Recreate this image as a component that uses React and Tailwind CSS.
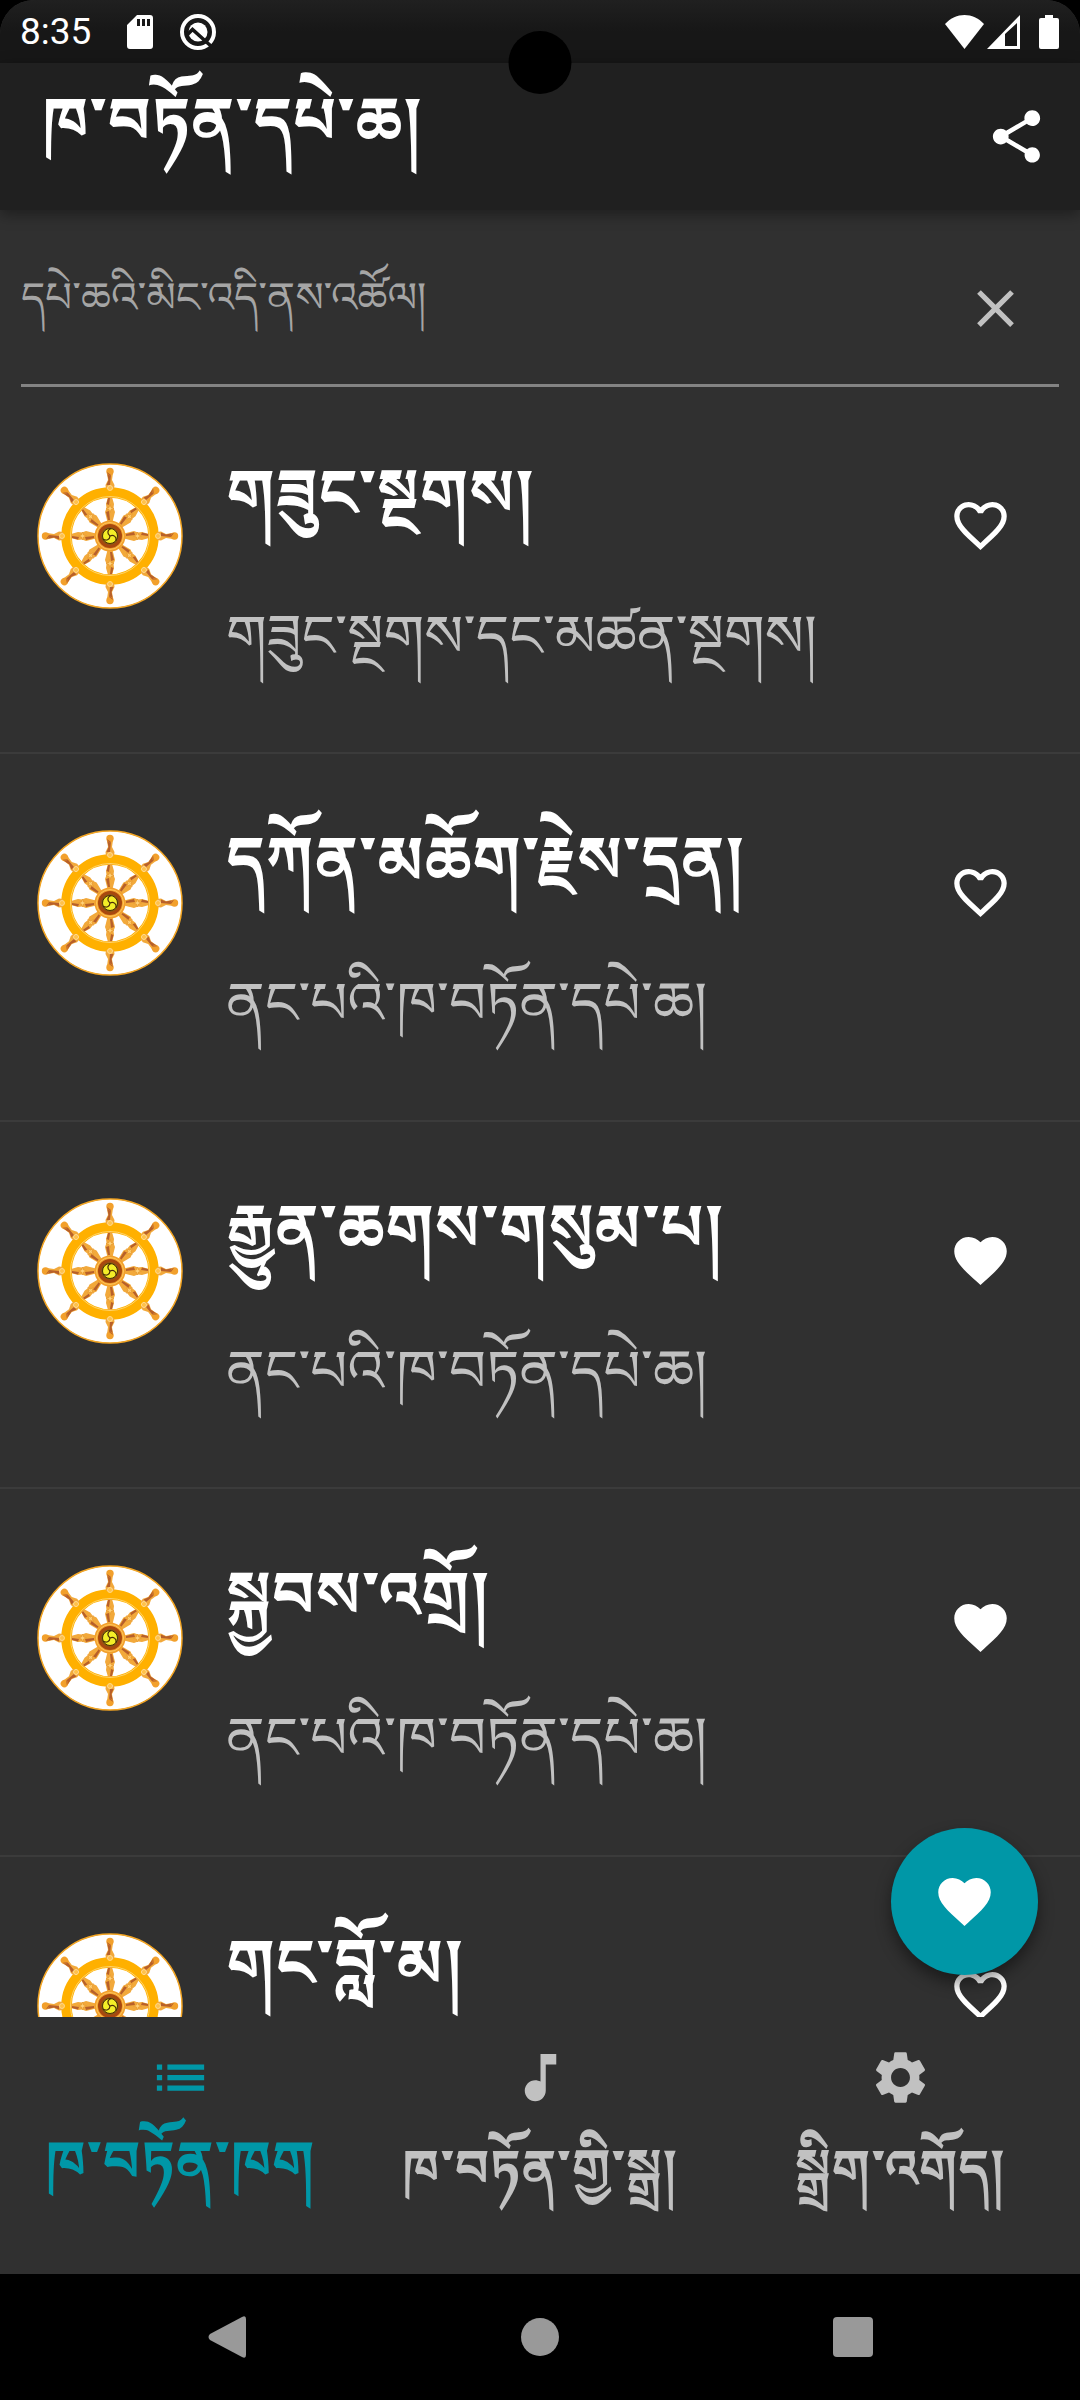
import { useState } from 'react';
import { MdShare, MdClose, MdFavorite, MdFavoriteBorder, MdList, MdMusicNote, MdSettings } from 'react-icons/md';

const BOOKS = [
  { id: 1, title: 'གཟུང་སྔགས།', category: 'གཟུང་སྔགས་དང་མཚན་སྔགས།', liked: false },
  { id: 2, title: 'དཀོན་མཆོག་རྗེས་དྲན།', category: 'ནང་པའི་ཁ་བཏོན་དཔེ་ཆ།', liked: false },
  { id: 3, title: 'རྒྱུན་ཆགས་གསུམ་པ།', category: 'ནང་པའི་ཁ་བཏོན་དཔེ་ཆ།', liked: true },
  { id: 4, title: 'སྐྱབས་འགྲོ།', category: 'ནང་པའི་ཁ་བཏོན་དཔེ་ཆ།', liked: true },
  { id: 5, title: 'གང་བློ་མ།', liked: false },
];

const SPOKES = [0, 45, 90, 135, 180, 225, 270, 315];

function DharmaWheel() {
  return (
    <svg viewBox="0 0 146 146" className="w-[146px] h-[146px] shrink-0" aria-hidden="true">
      <circle cx="73" cy="73" r="72" fill="#fff" stroke="#f5a623" strokeWidth="1.5" />
      <circle cx="73" cy="73" r="43.5" fill="none" stroke="#ffb000" strokeWidth="10.5" />
      <circle cx="73" cy="73" r="39.5" fill="none" stroke="#ffd56b" strokeWidth="1" />
      {SPOKES.map(a => (
        <g key={a} transform={`rotate(${a} 73 73)`}>
          <path d="M70.5 59 L68 49 L69.5 45 L69 41 L71 34 L75 34 L77 41 L76.5 45 L78 49 L75.5 59 Z" fill="#f2a93b" />
          <path d="M71 57 L69 49 L72 48 L73 57 Z M69.5 41 L71 35 L73 35 L72 42 Z" fill="#b8602a" />
          <path d="M69 26 L68.5 22 L71 17 L70 10 L76 10 L75 17 L77.5 22 L77 26 Z" fill="#f2a93b" />
          <path d="M69.5 22 L71.5 17 L70 10 L74 12 L73 22 Z" fill="#b8602a" />
          <circle cx="73" cy="8.5" r="3.7" fill="#f2a02c" />
          <path d="M70 9 A3.5 3.5 0 0 0 74 12 Z" fill="#b8602a" />
          <path d="M73 41.5 L74 44.5 L77 45.5 L74 46.5 L73 49.5 L72 46.5 L69 45.5 L72 44.5 Z" fill="#ffd27a" stroke="#e08a1e" strokeWidth="0.5" />
          <circle cx="73" cy="25" r="2.5" fill="#ffc14a" stroke="#ffe0a0" strokeWidth="0.8" />
        </g>
      ))}
      <circle cx="73" cy="73" r="15.5" fill="#f2a02c" />
      <circle cx="73" cy="73" r="13.5" fill="none" stroke="#ffc65c" strokeWidth="1" />
      <circle cx="73" cy="73" r="12" fill="#a8480f" />
      <circle cx="73" cy="73" r="9" fill="#8a5a14" />
      <circle cx="73" cy="73" r="7.5" fill="#f3ee28" stroke="#4a2c08" strokeWidth="1" />
      {[0, 120, 240].map(a => (
        <path key={a} transform={`rotate(${a} 73 73)`} d="M73 73 C70 71 70 67 74 65.5" fill="none" stroke="#4a2c08" strokeWidth="1.2" />
      ))}
    </svg>
  );
}

function StatusBar() {
  return (
    <div className="h-[63px] shrink-0 bg-linear-to-b from-[#202020] to-[#171717] to-50% flex items-center justify-between pl-[20px] pr-[21px]">
      <div className="flex items-center">
        <span className="text-[37px] leading-[63px]">8:35</span>
        <svg viewBox="0 0 26 34" className="w-[26px] h-[34px] ml-[36px]" fill="#fff" aria-hidden="true">
          <path fillRule="evenodd" d="M10 0H23a3 3 0 0 1 3 3V31a3 3 0 0 1-3 3H3a3 3 0 0 1-3-3V10ZM10 4v7h3V4ZM15 4v7h3V4ZM20 4v7h3V4Z" />
        </svg>
        <svg viewBox="0 0 36 36" className="w-[36px] h-[36px] ml-[27px]" fill="none" aria-hidden="true">
          <circle cx="18" cy="18" r="16" stroke="#fff" strokeWidth="4" />
          <circle cx="18" cy="18" r="9.5" fill="#fff" />
          <path d="M7 21 L12.5 15.5 L32 33" stroke="#171717" strokeWidth="3.5" />
        </svg>
      </div>
      <div className="flex items-center">
        <svg viewBox="0 0 39 34" className="w-[39px] h-[34px]" fill="#fff" aria-hidden="true">
          <path d="M0 9 C11 -3 28 -3 39 9 L19.5 34 Z" />
        </svg>
        <svg viewBox="0 0 33 34" className="w-[33px] h-[34px] ml-[3px]" fill="#fff" aria-hidden="true">
          <path fillRule="evenodd" d="M33 0V34H0ZM30 8L18 19V31H30Z" />
        </svg>
        <svg viewBox="0 0 20 34" className="w-[20px] h-[34px] ml-[19px]" fill="#fff" aria-hidden="true">
          <path d="M6 0h8v3h4a2 2 0 0 1 2 2v27a2 2 0 0 1-2 2H2a2 2 0 0 1-2-2V5a2 2 0 0 1 2-2h4Z" />
        </svg>
      </div>
    </div>
  );
}

function BookRow({ book, onToggle }) {
  const Heart = book.liked ? MdFavorite : MdFavoriteBorder;
  return (
    <li className="flex items-start h-[367px] even:h-[368px] shrink-0 border-b-2 border-[#3b3b3b] pl-[37px] pr-[68px]">
      <div className="pt-[76px]"><DharmaWheel /></div>
      <div className="flex-1 ml-[43px] pt-[46px]">
        <h2 className="text-[65px] leading-[120px] font-bold whitespace-nowrap">{book.title}</h2>
        {book.category && (
          <p className="text-[58px] leading-[120px] text-[#c1c1c1] whitespace-nowrap mt-[23px]">{book.category}</p>
        )}
      </div>
      <button aria-label="Favourite" aria-pressed={book.liked} onClick={() => onToggle(book.id)} className="mt-[107px]">
        <Heart className="size-[63px]" />
      </button>
    </li>
  );
}

export default function App() {
  const [books, setBooks] = useState(BOOKS);
  const [query, setQuery] = useState('');

  const toggle = id => setBooks(books.map(b => (b.id === id ? { ...b, liked: !b.liked } : b)));

  return (
    <div className="h-screen bg-black text-white font-['Roboto','Noto_Serif_Tibetan',serif] flex flex-col">
      <div className="relative flex-1 min-h-0 flex flex-col bg-[#303030] rounded-t-[34px] overflow-hidden">
        <StatusBar />
        <header className="relative z-10 h-[147px] shrink-0 bg-[#202020] shadow-[0_4px_14px_rgba(0,0,0,0.4)] flex items-center justify-between pl-[42px] pr-[32px]">
          <h1 className="self-start text-[65px] leading-[116px] font-bold">ཁ་བཏོན་དཔེ་ཆ།</h1>
          <button aria-label="Share"><MdShare className="size-[63px]" /></button>
        </header>
        {/* camera cutout */}
        <div className="absolute z-20 left-1/2 top-[31px] -translate-x-1/2 size-[63px] rounded-full bg-black" />

        <div className="mx-[21px] h-[177px] shrink-0 border-b-3 border-[#838383] flex items-center pr-[32px]">
          <input value={query} onChange={e => setQuery(e.target.value)} aria-label="Search"
            placeholder="དཔེ་ཆའི་མིང་འདི་ནས་འཚོལ།"
            className="flex-1 h-[120px] text-[42px] outline-none placeholder:text-[#a5a5a5]" />
          <button aria-label="Clear" onClick={() => setQuery('')} className="text-[#c1c1c1] mt-[22px]">
            <MdClose className="size-[63px]" />
          </button>
        </div>

        <ul className="flex-1 min-h-0 overflow-hidden flex flex-col">
          {books.map(b => <BookRow key={b.id} book={b} onToggle={toggle} />)}
        </ul>

        <button aria-label="Favourites"
          className="absolute right-[42px] bottom-[299px] size-[147px] rounded-full bg-[#0097a7] flex items-center justify-center shadow-[0_8px_16px_rgba(0,0,0,0.45)]">
          <MdFavorite className="size-[63px]" />
        </button>

        <nav className="h-[257px] shrink-0 grid grid-cols-3 text-[#c1c1c1]">
          <button className="flex flex-col items-center pt-[29px] text-[#0097a7]">
            <MdList className="size-[63px]" />
            <span className="text-[57px] leading-[106px] font-bold whitespace-nowrap">ཁ་བཏོན་ཁག</span>
          </button>
          <button className="flex flex-col items-center pt-[29px]">
            <MdMusicNote className="size-[63px]" />
            <span className="text-[52px] leading-[120px] font-bold whitespace-nowrap">ཁ་བཏོན་གྱི་སྒྲ།</span>
          </button>
          <button className="flex flex-col items-center pt-[29px]">
            <MdSettings className="size-[63px]" />
            <span className="text-[52px] leading-[120px] font-bold whitespace-nowrap">སྒྲིག་འགོད།</span>
          </button>
        </nav>
      </div>

      <div className="h-[126px] shrink-0 grid grid-cols-3 items-center px-[70px]">
        <button aria-label="Back" className="justify-self-center">
          <svg viewBox="0 0 38 42" className="w-[38px] h-[42px]" fill="#999"><path d="M34 1 Q38 -1 38 3 V39 Q38 43 34 41 L2 24 Q-1 21 2 18 Z" /></svg>
        </button>
        <button aria-label="Home" className="justify-self-center size-[38px] rounded-full bg-[#999]" />
        <button aria-label="Recents" className="justify-self-center size-[40px] rounded-[4px] bg-[#999]" />
      </div>
    </div>
  );
}
